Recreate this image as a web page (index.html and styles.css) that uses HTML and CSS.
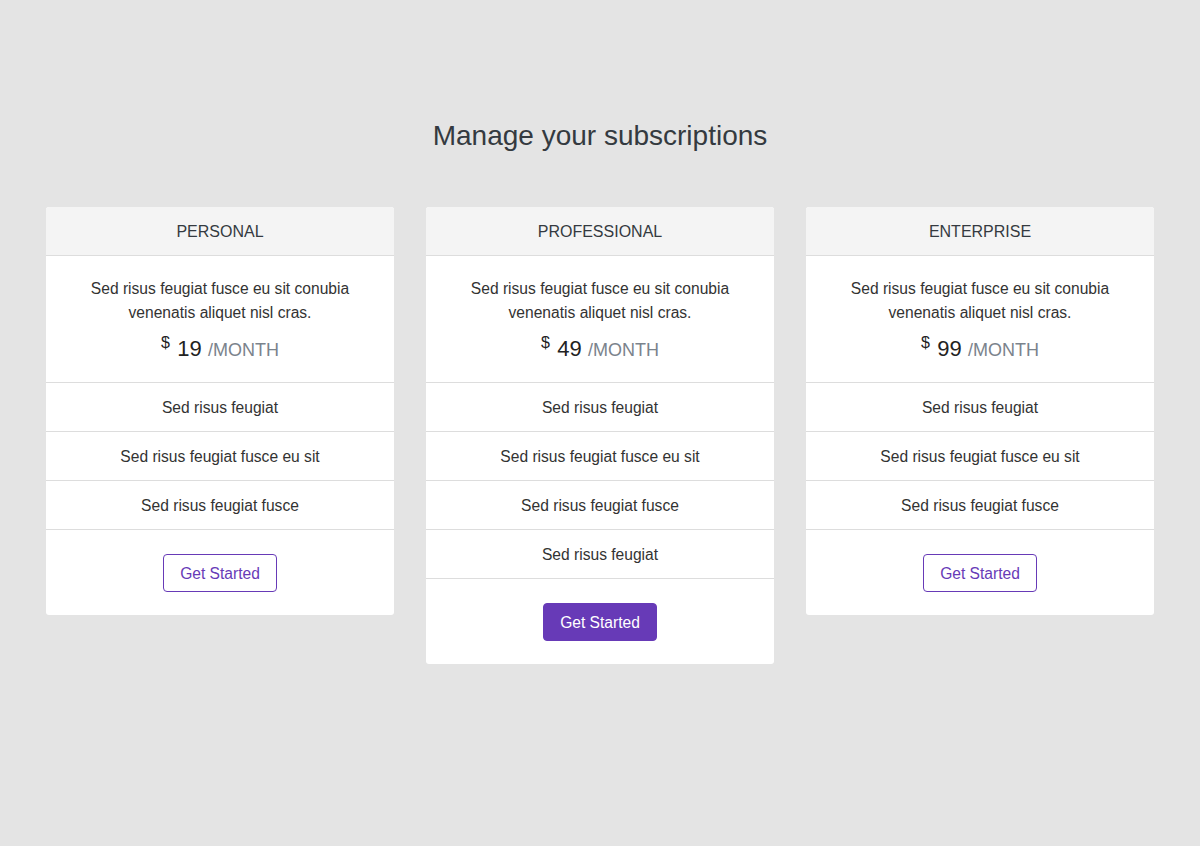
FILE: index.html
```html
<!DOCTYPE html>
<html>
<head>
<meta charset="utf-8">
<link rel="stylesheet" href="styles.css">
</head>
<body>
<main class="page">
  <h1 class="title">Manage your subscriptions</h1>
  <div class="plans">
    <div class="card">
      <div class="card-head">PERSONAL</div>
      <div class="card-body">
        <p class="desc">Sed risus feugiat fusce eu sit conubia venenatis aliquet nisl cras.</p>
        <div class="price"><sup class="cur">$</sup> <span class="amt">19</span> <span class="per">/MONTH</span></div>
      </div>
      <ul class="features">
        <li>Sed risus feugiat</li>
        <li>Sed risus feugiat fusce eu sit</li>
        <li>Sed risus feugiat fusce</li>
      </ul>
      <div class="card-foot"><button class="btn btn-outline">Get Started</button></div>
    </div>
    <div class="card">
      <div class="card-head">PROFESSIONAL</div>
      <div class="card-body">
        <p class="desc">Sed risus feugiat fusce eu sit conubia venenatis aliquet nisl cras.</p>
        <div class="price"><sup class="cur">$</sup> <span class="amt">49</span> <span class="per">/MONTH</span></div>
      </div>
      <ul class="features">
        <li>Sed risus feugiat</li>
        <li>Sed risus feugiat fusce eu sit</li>
        <li>Sed risus feugiat fusce</li>
        <li>Sed risus feugiat</li>
      </ul>
      <div class="card-foot"><button class="btn btn-solid">Get Started</button></div>
    </div>
    <div class="card">
      <div class="card-head">ENTERPRISE</div>
      <div class="card-body">
        <p class="desc">Sed risus feugiat fusce eu sit conubia venenatis aliquet nisl cras.</p>
        <div class="price"><sup class="cur">$</sup> <span class="amt">99</span> <span class="per">/MONTH</span></div>
      </div>
      <ul class="features">
        <li>Sed risus feugiat</li>
        <li>Sed risus feugiat fusce eu sit</li>
        <li>Sed risus feugiat fusce</li>
      </ul>
      <div class="card-foot"><button class="btn btn-outline">Get Started</button></div>
    </div>
  </div>
</main>
</body>
</html>
```
FILE: styles.css
```css
* { box-sizing: border-box; }
html, body { margin: 0; padding: 0; }
body {
  background: #e4e4e4;
  font-family: "Liberation Sans", Arial, sans-serif;
  color: #333;
  font-size: 15.6px;
  line-height: 24px;
}
.page {
  padding: 116px 46px 0;
}
.title {
  margin: 0 0 51px;
  text-align: center;
  font-weight: 400;
  font-size: 28px;
  line-height: 40px;
  color: #343a40;
}
.plans {
  display: flex;
  align-items: flex-start;
  gap: 32px;
}
.card {
  flex: 1 1 0;
  background: #fff;
  border-radius: 3px;
  text-align: center;
  overflow: hidden;
}
.card-head {
  background: #f4f4f4;
  border-bottom: 1px solid #dddddd;
  height: 49px;
  padding-top: 2px;
  line-height: 46px;
  font-size: 16px;
  color: #343a40;
}
.card-body {
  padding: 21px 40px 9px;
}
.desc {
  margin: 0;
}
.price {
  height: 48px;
  line-height: 48px;
}
.cur {
  font-size: 16px;
  vertical-align: 0;
  position: relative;
  top: -8px;
  margin-right: 3px;
  color: #222;
}
.amt {
  font-size: 22px;
  color: #222;
  margin-right: 2px;
}
.per {
  font-size: 18px;
  color: #7b838c;
}
.features {
  list-style: none;
  margin: 0;
  padding: 0;
}
.features li {
  border-top: 1px solid #dddddd;
  height: 49px;
  padding-top: 2px;
  line-height: 46px;
}
.card-foot {
  border-top: 1px solid #dddddd;
  padding: 24px 0 23px;
}
.btn {
  font-family: inherit;
  font-size: 15.6px;
  line-height: 24px;
  height: 38px;
  padding: 7px 16px 5px;
  border-radius: 4px;
  cursor: pointer;
}
.btn-outline {
  background: #fff;
  color: #673ab7;
  border: 1px solid #673ab7;
}
.btn-solid {
  background: #673ab7;
  color: #fff;
  border: 1px solid #673ab7;
}
```
